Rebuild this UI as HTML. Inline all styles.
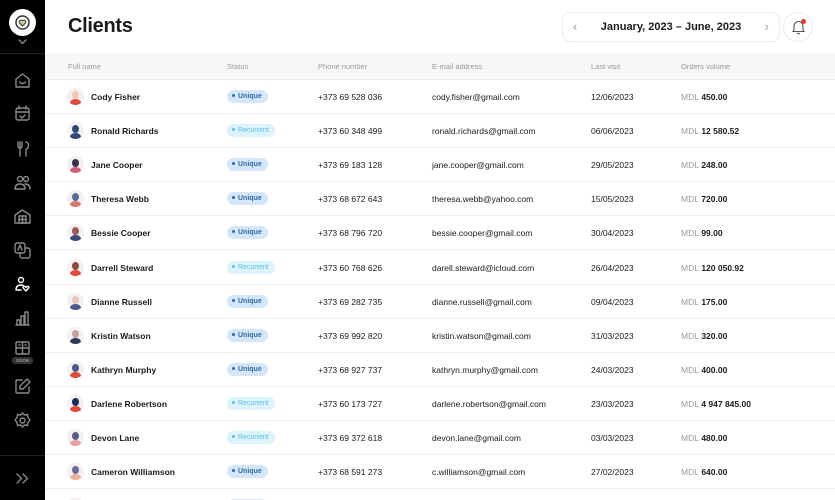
<!DOCTYPE html>
<html><head><meta charset="utf-8"><style>
*{margin:0;padding:0;box-sizing:border-box}
html{width:835px;height:500px;overflow:hidden}
body{width:835px;height:500px;overflow:hidden;background:#fff;font-family:"Liberation Sans",sans-serif;position:relative;color:#1a1a1a}
.sb{position:absolute;left:0;top:0;width:45px;height:500px;background:#000;z-index:2}
.sb svg{position:absolute;left:12px;width:21px;height:21px;fill:none;stroke:#8a8a8a;stroke-width:1.4;stroke-linecap:round;stroke-linejoin:round}
.logo{position:absolute;left:9px;top:9px;width:27px;height:27px;border-radius:50%;background:#fff}
h1{position:absolute;left:68px;top:15px;font-size:20px;font-weight:bold;letter-spacing:-0.3px}
.dp{position:absolute;left:562px;top:12px;width:218px;height:30px;border:1px solid #ececec;border-radius:8px;font-size:11px;font-weight:bold;text-align:center;line-height:28px}
.bell{position:absolute;left:783px;top:12px;width:30px;height:30px;border:1px solid #ececec;border-radius:50%}
.th{position:absolute;left:45px;top:53px;right:0;height:27px;background:#f7f7f7;border-bottom:1px solid #ececec}
.th span{position:absolute;top:9px;font-size:7.5px;color:#999}
#rows{position:absolute;left:0;top:0;width:835px;height:500px;overflow:hidden}
.row{position:absolute;left:45px;right:0;height:34px;border-bottom:1px solid #eeeeee;font-size:8.5px}
.row span{position:absolute;top:12px}
.av{position:absolute;left:22px;top:8px;width:17px;height:17px;border-radius:50%;background:#f4f0f0;overflow:hidden}
.av i{position:absolute;left:5px;top:3px;width:7px;height:8px;border-radius:50%}
.av b{position:absolute;left:3px;top:11px;width:11px;height:8px;border-radius:50%}
.nm{left:46px;font-weight:bold}
.st{left:182px;top:10px!important;height:13px;border-radius:7px;font-size:7px;line-height:13px;padding:0 6px 0 5px;font-weight:bold}
.u{background:#d4e6f7;color:#2f6aa8}
.r{background:#dcf3fb;color:#5cc0e0;font-weight:normal}
.st:before{content:"";display:inline-block;width:3px;height:3px;border-radius:50%;background:currentColor;margin-right:3px;vertical-align:1px}
.ph{left:273px}.em{left:387px}.lv{left:546px}.ov{left:636px;font-weight:bold}
.ov em{font-style:normal;font-weight:normal;color:#999}
</style></head><body>
<div class="sb">
<div class="logo"><svg style="left:5px;top:5px;width:17px;height:17px" viewBox="0 0 17 17"><circle cx="8.5" cy="8.5" r="6.5" stroke="#333" stroke-width="1.5" fill="none"/><path d="M8.5 12 L5.5 9 A1.7 1.7 0 0 1 8.5 6.8 A1.7 1.7 0 0 1 11.5 9 Z" fill="#c9d19a" stroke="#333" stroke-width="1"/></svg></div>
<svg style="top:36px;width:21px;height:12px" viewBox="0 0 21 12"><path d="M7 4l3.5 3.5L14 4"/></svg>
<div style="position:absolute;left:0;top:53px;width:45px;height:1px;background:#222"></div>
<svg style="top:70px" viewBox="0 0 21 21"><path d="M4 9l6.5-5 6.5 5v8H4z"/><path d="M7.5 12q3 3 6 0"/></svg>
<svg style="top:103px" viewBox="0 0 21 21"><rect x="4" y="5" width="13" height="12" rx="2"/><path d="M7 3v3M14 3v3M4 9h13M8 13l2 2 3-3"/></svg>
<svg style="top:138px" viewBox="0 0 21 21"><path d="M6 4v4q0 2 2 2M10 4v4q0 2-2 2M8 4v14M14 4a2.5 3.5 0 1 1 0 7v7"/></svg>
<svg style="top:172px" viewBox="0 0 21 21"><circle cx="8" cy="7" r="2.5"/><circle cx="14" cy="7" r="2.5"/><path d="M3 17q0-5 5-5t5 5zM13 12q5 0 5 5"/></svg>
<svg style="top:206px" viewBox="0 0 21 21"><path d="M3 9l7.5-5 7.5 5v8H3z"/><rect x="7" y="10" width="7" height="7"/><path d="M10.5 10v7M7 13.5h7"/></svg>
<svg style="top:240px" viewBox="0 0 21 21"><rect x="3" y="3" width="10" height="10" rx="2"/><path d="M13 8h3a2 2 0 0 1 2 2v6a2 2 0 0 1-2 2h-6a2 2 0 0 1-2-2v-3M6 10l2-5 2 5"/></svg>
<svg style="top:274px;stroke:#fff" viewBox="0 0 21 21"><circle cx="9" cy="6" r="2.5"/><path d="M4 16q0-5 5-5 2 0 3 1M4 16h5M12 15l2 2 3-3.5a1.3 1.3 0 0 0-2-1l-1 1-1-1a1.3 1.3 0 0 0-2 1z"/></svg>
<svg style="top:308px" viewBox="0 0 21 21"><path d="M4 17h13M5 17v-5h3v5M9 17V8h3v9M13 17V4h3v13"/></svg>
<svg style="top:340px;height:16px" viewBox="0 0 21 16"><rect x="4" y="2" width="13" height="12" rx="1"/><path d="M4 8h13M10.5 2v12M7 5h1M13 5h1"/></svg>
<div style="position:absolute;left:12px;top:357px;width:21px;height:7px;border-radius:3px;background:#333;color:#999;font-size:4.5px;text-align:center;line-height:7px;font-weight:bold">SOON</div>
<svg style="top:376px" viewBox="0 0 21 21"><path d="M10 4H5a1 1 0 0 0-1 1v11a1 1 0 0 0 1 1h11a1 1 0 0 0 1-1v-5M15 3l3 3-7 7H8v-3z"/></svg>
<svg style="top:410px" viewBox="0 0 21 21"><circle cx="10.5" cy="10.5" r="2.5"/><path d="M10.5 3l2 2 3-.5.5 3 2 2.5-2 2.5-.5 3-3-.5-2 2-2-2-3 .5-.5-3-2-2.5 2-2.5.5-3 3 .5z"/></svg>
<div style="position:absolute;left:0;top:455px;width:45px;height:1px;background:#222"></div>
<svg style="top:468px" viewBox="0 0 21 21"><path d="M5 6l4.5 4.5L5 15M11 6l4.5 4.5L11 15"/></svg>
</div>
<h1>Clients</h1>
<div class="dp"><span style="position:absolute;left:10px;color:#999;font-weight:normal;font-size:13px">‹</span>January, 2023 – June, 2023<span style="position:absolute;right:10px;color:#999;font-weight:normal;font-size:13px">›</span></div>
<div class="bell"><svg style="position:absolute;left:7px;top:6px" width="15" height="16" viewBox="0 0 15 16" fill="none" stroke="#555" stroke-width="1.1"><path d="M3 11V7a4.5 4.5 0 0 1 9 0v4l1 1.5H2zM6 14q1.5 1.5 3 0"/></svg><div style="position:absolute;left:17px;top:6px;width:5px;height:5px;border-radius:50%;background:#e53935"></div></div>
<div class="th"><span style="left:23px">Full name</span><span style="left:182px">Status</span><span style="left:273px">Phone number</span><span style="left:387px">E-mail address</span><span style="left:546px">Last visit</span><span style="left:636px">Orders volume</span></div>
<div id="rows"></div>
<script>
const d=[["Cody Fisher","u","+373 69 528 036","cody.fisher@gmail.com","12/06/2023","450.00","#f2c9b0","#e04a3a"],
["Ronald Richards","r","+373 60 348 499","ronald.richards@gmail.com","06/06/2023","12 580.52","#2f4a7a","#2f4a7a"],
["Jane Cooper","u","+373 69 183 128","jane.cooper@gmail.com","29/05/2023","248.00","#3a3050","#d0607a"],
["Theresa Webb","u","+373 68 672 643","theresa.webb@yahoo.com","15/05/2023","720.00","#5a6a9a","#d47a6a"],
["Bessie Cooper","u","+373 68 796 720","bessie.cooper@gmail.com","30/04/2023","99.00","#a05a5a","#3a4a7a"],
["Darrell Steward","r","+373 60 768 626","darell.steward@icloud.com","26/04/2023","120 050.92","#8a4a3a","#e04a3a"],
["Dianne Russell","u","+373 69 282 735","dianne.russell@gmail.com","09/04/2023","175.00","#e8c8c0","#4a5a8a"],
["Kristin Watson","u","+373 69 992 820","kristin.watson@gmail.com","31/03/2023","320.00","#c8a0a0","#2f3a5a"],
["Kathryn Murphy","u","+373 68 927 737","kathryn.murphy@gmail.com","24/03/2023","400.00","#4a5a8a","#e04a3a"],
["Darlene Robertson","r","+373 60 173 727","darlene.robertson@gmail.com","23/03/2023","4 947 845.00","#1a2a5a","#e04a3a"],
["Devon Lane","r","+373 69 372 618","devon.lane@gmail.com","03/03/2023","480.00","#5a5a8a","#e8a0a0"],
["Cameron Williamson","u","+373 68 591 273","c.williamson@gmail.com","27/02/2023","640.00","#6a6a9a","#f0b0a0"],
["","u","","","","","#ddd","#ddd"]];
let h="";d.forEach((x,i)=>{h+=`<div class="row" style="top:${80+i*34.1}px"><div class="av"><i style="background:${x[6]}"></i><b style="background:${x[7]}"></b></div><span class="nm">${x[0]}</span><span class="st ${x[1]}">${x[1]=="u"?"Unique":"Recurrent"}</span><span class="ph">${x[2]}</span><span class="em">${x[3]}</span><span class="lv">${x[4]}</span><span class="ov">${x[5]?"<em>MDL</em> "+x[5]:""}</span></div>`});
document.getElementById("rows").innerHTML=h;
</script>
</body></html>
